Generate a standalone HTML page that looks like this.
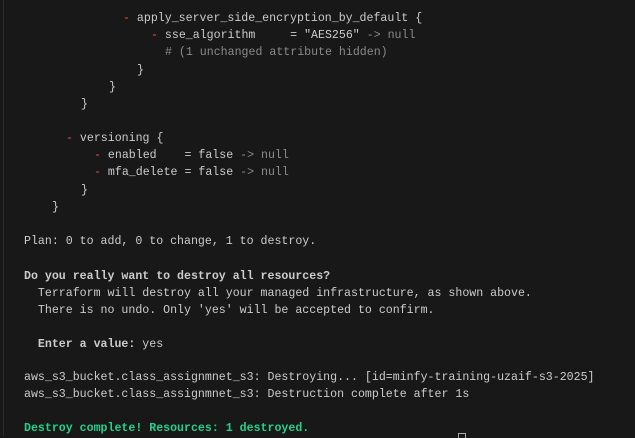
<!DOCTYPE html>
<html><head><style>
body{margin:0;width:635px;height:436px;background:#181818;overflow:hidden;position:relative;font-family:"Liberation Mono",monospace;font-size:11.6px;color:#cccccc}
.bl{position:absolute;left:3px;top:0;width:1px;height:436px;background:#2b2b2b}
.l{position:absolute;white-space:pre;line-height:17px;height:17px}
.r{color:#f14c4c}.g{color:#8a8a8a}.b{font-weight:bold}.gr{color:#23d18b;font-weight:bold}
</style></head><body>
<div class="bl"></div>
<div class="l" style="left:123px;top:10px"><span class="r">-</span> apply_server_side_encryption_by_default {</div>
<div class="l" style="left:151px;top:27px"><span class="r">-</span> sse_algorithm     = "AES256" <span class="g">-&gt; null</span></div>
<div class="l g" style="left:165px;top:44px"># (1 unchanged attribute hidden)</div>
<div class="l" style="left:137px;top:62px">}</div>
<div class="l" style="left:109px;top:79px">}</div>
<div class="l" style="left:81px;top:96px">}</div>
<div class="l" style="left:66px;top:130px"><span class="r">-</span> versioning {</div>
<div class="l" style="left:94px;top:147px"><span class="r">-</span> enabled    = false <span class="g">-&gt; null</span></div>
<div class="l" style="left:94px;top:164px"><span class="r">-</span> mfa_delete = false <span class="g">-&gt; null</span></div>
<div class="l" style="left:81px;top:182px">}</div>
<div class="l" style="left:52px;top:199px">}</div>
<div class="l" style="left:24px;top:233px">Plan: 0 to add, 0 to change, 1 to destroy.</div>
<div class="l b" style="left:24px;top:268px">Do you really want to destroy all resources?</div>
<div class="l" style="left:24px;top:285px">  Terraform will destroy all your managed infrastructure, as shown above.</div>
<div class="l" style="left:24px;top:302px">  There is no undo. Only 'yes' will be accepted to confirm.</div>
<div class="l" style="left:24px;top:336px">  <span class="b">Enter a value:</span> yes</div>
<div class="l" style="left:24px;top:369px">aws_s3_bucket.class_assignmnet_s3: Destroying... [id=minfy-training-uzaif-s3-2025]</div>
<div class="l" style="left:24px;top:386px">aws_s3_bucket.class_assignmnet_s3: Destruction complete after 1s</div>
<div class="l gr" style="left:24px;top:420px">Destroy complete! Resources: 1 destroyed.</div>
<div style="position:absolute;left:458px;top:433px;width:6px;height:4px;border:1px solid #aaa;border-bottom:none"></div>
</body></html>
